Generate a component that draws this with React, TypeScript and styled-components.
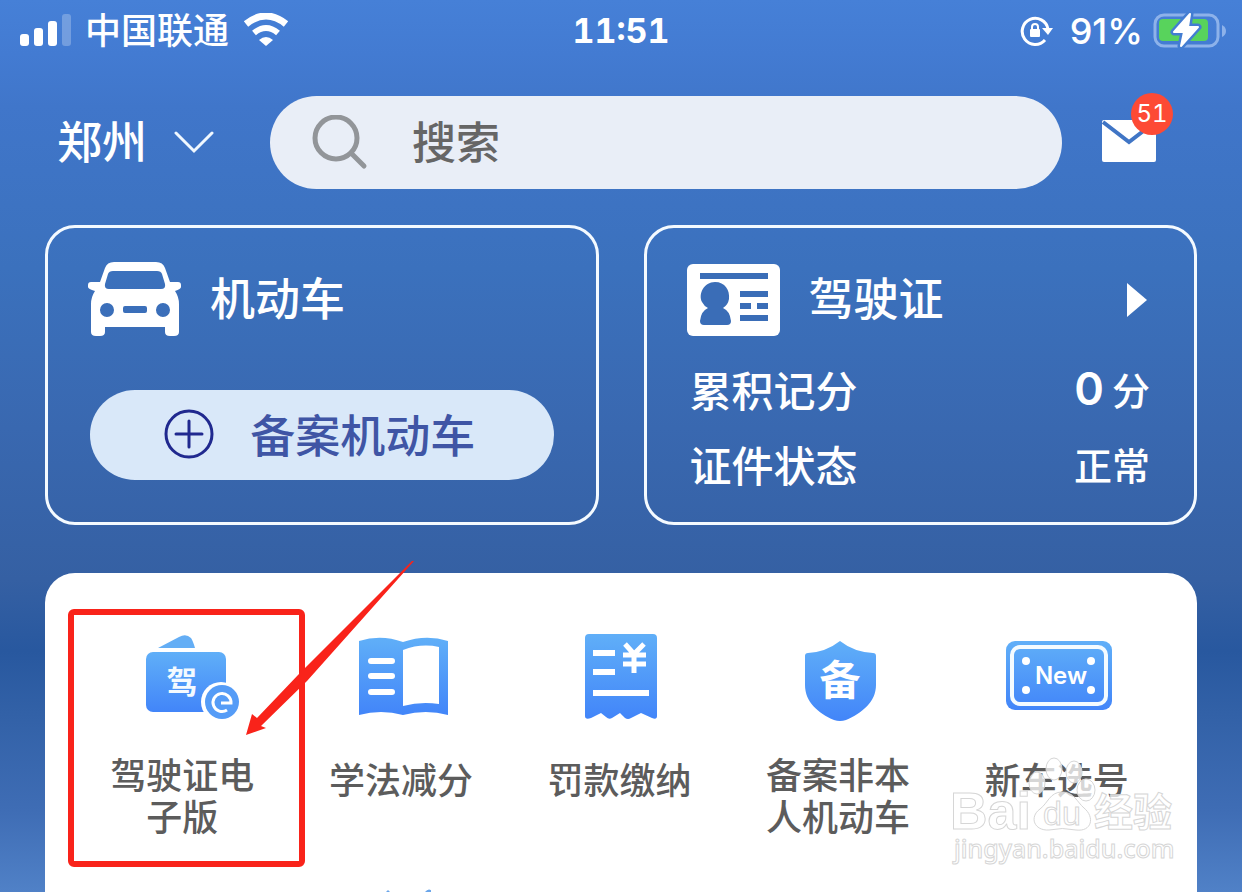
import React from "react";
import styled, { createGlobalStyle } from "styled-components";

const GlobalStyle = createGlobalStyle`
  * { box-sizing: border-box; }
  body {
    margin: 0;
    font-family: Inter, "Noto Sans CJK SC", sans-serif;
    font-weight: 500;
    color: #fff;
  }
  button {
    margin: 0;
    padding: 0;
    border: 0;
    background: none;
    color: inherit;
    font: inherit;
    cursor: pointer;
  }
  svg { display: block; flex: none; }
`;

const Page = styled.div`
  display: flex;
  flex-direction: column;
  min-height: 100vh;
  background: linear-gradient(
    180deg,
    #4680d7 0%,
    #437bd2 6%,
    #4076ca 12%,
    #3b71bd 30%,
    #3968b0 48%,
    #3560a3 65%,
    #28589f 73%,
    #3261a7 80%,
    #3f6db5 91%,
    #5081c7 100%
  );
`;

const StatusBar = styled.div`
  display: grid;
  grid-template-columns: 1fr auto 1fr;
  align-items: center;
  height: 62px;
  padding: 0 16px;
  line-height: 40px;
`;

const StatusGroup = styled.div<{ $end?: boolean }>`
  display: flex;
  align-items: center;
  justify-content: ${(p) => (p.$end ? "flex-end" : "flex-start")};
  gap: ${(p) => (p.$end ? 10 : 14)}px;
`;

const Carrier = styled.span`
  font-size: 36px;
`;

const Clock = styled.time`
  font-size: 34px;
  font-weight: 700;
  font-variant-numeric: tabular-nums;
`;

const Percent = styled.span`
  margin-left: 7px;
  font-size: 36px;
`;

const SearchRow = styled.header`
  display: flex;
  align-items: center;
  margin-top: 34px;
  padding: 0 86px 0 57px;
`;

const City = styled.button`
  display: flex;
  align-items: center;
  gap: 27px;
  width: 213px;
  font-size: 45px;
  line-height: 60px;
`;

const SearchBox = styled.label`
  display: flex;
  flex: 1;
  align-items: center;
  gap: 44px;
  min-width: 0;
  height: 93px;
  padding: 0 42px;
  border-radius: 47px;
  background: #e9eef7;
`;

const SearchInput = styled.input`
  flex: 1;
  min-width: 0;
  padding: 0;
  border: 0;
  outline: 0;
  background: none;
  color: #666;
  font: inherit;
  font-size: 44px;
  line-height: 60px;
  &::placeholder { color: #666; opacity: 1; }
`;

const Mail = styled.button`
  position: relative;
  margin-left: 40px;
`;

const Badge = styled.span`
  position: absolute;
  top: -27px;
  right: -17px;
  width: 42px;
  border-radius: 21px;
  background: #fd4a35;
  font-size: 24px;
  font-variant-numeric: tabular-nums;
  font-weight: 400;
  line-height: 42px;
  text-align: center;
`;

const Cards = styled.section`
  display: grid;
  grid-template-columns: 1fr 1fr;
  gap: 45px;
  padding: 36px 45px 48px;
`;

const Card = styled.article`
  min-height: 300px;
  padding: 33px 40px 0;
  border: 3px solid #f4faff;
  border-radius: 30px;
`;

const CardHead = styled.div`
  display: flex;
  align-items: center;
  gap: 29px;
  height: 78px;
`;

const CardTitle = styled.h2`
  flex: 1;
  margin: 0;
  font-size: 45px;
  font-weight: 500;
  line-height: 60px;
`;

const CardAction = styled.div`
  margin-top: 51px;
  padding: 0 2px;
`;

const AddButton = styled.button`
  display: flex;
  align-items: center;
  justify-content: center;
  gap: 34px;
  width: 100%;
  height: 90px;
  padding: 0 4px 4px 0;
  border-radius: 45px;
  background: #d9e8f9;
  color: #3f55a5;
  font-size: 45px;
`;

const Facts = styled.dl`
  margin: 12px 0 0;
`;

const Fact = styled.div`
  display: flex;
  align-items: center;
  justify-content: space-between;
  height: 75px;
  padding: 0 4px 0 3px;
`;

const FactName = styled.dt`
  font-size: 42px;
`;

const FactValue = styled.dd`
  display: flex;
  align-items: baseline;
  gap: 8px;
  margin: 0;
  font-size: 38px;
`;

const Score = styled.b`
  font-size: 45px;
  font-weight: 600;
`;

const Panel = styled.main`
  position: relative;
  display: flex;
  flex: 1;
  flex-direction: column;
  justify-content: space-between;
  margin: 0 45px;
  padding: 57px 31px 0 28px;
  border-radius: 30px 30px 0 0;
  background: #fff;
`;

const Services = styled.nav`
  display: grid;
  grid-template-columns: repeat(5, 1fr);
  align-items: start;
`;

const Service = styled.button`
  position: relative;
  display: flex;
  flex-direction: column;
  align-items: center;
  gap: 29px;
`;

const ServiceLabel = styled.span`
  display: flex;
  align-items: center;
  justify-content: center;
  width: 150px;
  min-height: 52px;
  color: #5c5c5c;
  font-size: 36px;
  line-height: 42px;
`;

const Highlight = styled.span`
  position: absolute;
  top: -21px;
  left: -5px;
  width: 237px;
  height: 258px;
  border: 6px solid #f9231a;
  border-radius: 6px;
`;

const Pointer = styled.svg`
  position: absolute;
  top: -13px;
  left: 200px;
  pointer-events: none;
`;

const NextRow = styled.div`
  display: grid;
  grid-template-columns: repeat(5, 1fr);
  justify-items: center;
`;

const Watermark = styled.svg`
  position: absolute;
  top: 182px;
  right: 18px;
  pointer-events: none;
`;

const BlueFill = ({ id }: { id: string }) => (
  <defs>
    <linearGradient id={id} x1="0" y1="0" x2="0" y2="1">
      <stop offset="0" stopColor="#60aff8" />
      <stop offset="1" stopColor="#4285f9" />
    </linearGradient>
  </defs>
);

const ServiceIcon = ({ x = 0, children }: { x?: number; children: React.ReactNode }) => (
  <svg width="120" height="96" viewBox={`${x} 0 120 96`} aria-hidden="true">
    {children}
  </svg>
);

const cjk = '"Noto Sans CJK SC", sans-serif';

const WalletIcon = () => (
  <ServiceIcon>
    <BlueFill id="wallet" />
    <path d="M36 18 57 7Q64 3 69 8Q71 11 73 18Z" fill="#64aef5" />
    <rect x="24" y="22" width="80" height="60" rx="7" fill="url(#wallet)" />
    <text x="60" y="63" fontSize="31" fontWeight="700" fill="#f4faff" textAnchor="middle" fontFamily={cjk}>驾</text>
    <circle cx="99" cy="72" r="20" fill="#fff" />
    <circle cx="100" cy="72" r="17" fill="#559cf7" />
    <path d="M99 73H109A9 9 0 1 0 105 80" fill="none" stroke="#fff" strokeWidth="3" />
  </ServiceIcon>
);

const BookIcon = () => (
  <ServiceIcon x={-1}>
    <BlueFill id="book" />
    <path d="M17 11Q39 4 61 12Q84 4 106 11V85Q84 79 61 85Q39 79 17 85Z" fill="url(#book)" />
    <path d="M61 20Q79 13 97 17V74Q79 71 61 76Z" fill="#fff" />
    <path d="M29 31H50M29 46H50M29 62H50" stroke="#fff" strokeWidth="6" strokeLinecap="round" />
  </ServiceIcon>
);

const ReceiptIcon = () => (
  <ServiceIcon x={-2}>
    <BlueFill id="receipt" />
    <path d="M24 8Q24 4 28 4H92Q96 4 96 8V86Q96 90 91 88L80 83 70 88Q67 90 64 88L59 83 51 88Q48 90 45 87L40 83 30 88Q24 90 24 86Z" fill="url(#receipt)" />
    <path d="M32 23H54M32 42H54M32 63H88" stroke="#fff" strokeWidth="6" />
    <path d="M64 14 73 24 83 14M73 24V43M62 25H85M62 34H85" fill="none" stroke="#fff" strokeWidth="5" />
  </ServiceIcon>
);

const ShieldIcon = () => (
  <ServiceIcon x={-2}>
    <BlueFill id="shield" />
    <path d="M60 11Q74 22 93 23Q96 23 96 26V55C96 72 82 83 66 90Q60 92 54 90C38 83 25 72 25 55V26Q25 23 28 23Q46 22 60 11Z" fill="url(#shield)" />
    <text x="60" y="65" fontSize="41" fontWeight="700" fill="#fff" textAnchor="middle" fontFamily={cjk}>备</text>
  </ServiceIcon>
);

const PlateIcon = () => (
  <ServiceIcon x={-3}>
    <BlueFill id="plate" />
    <rect x="6" y="11" width="106" height="69" rx="9" fill="url(#plate)" />
    <rect x="12" y="17" width="94" height="57" rx="8" fill="none" stroke="#f4fbff" strokeWidth="4" />
    <g fill="#fff">
      <circle cx="26" cy="31" r="4" />
      <circle cx="91" cy="31" r="4" />
      <circle cx="26" cy="60" r="4" />
      <circle cx="91" cy="60" r="4" />
    </g>
    <text x="61" y="54" fontSize="24" fontWeight="600" fill="#fff" textAnchor="middle" fontFamily="Inter, sans-serif">New</text>
  </ServiceIcon>
);

const services = [
  { label: "驾驶证电子版", icon: <WalletIcon />, marked: true },
  { label: "学法减分", icon: <BookIcon /> },
  { label: "罚款缴纳", icon: <ReceiptIcon /> },
  { label: "备案非本人机动车", icon: <ShieldIcon /> },
  { label: "新车选号", icon: <PlateIcon /> },
];

const SignalIcon = () => (
  <svg width="55" height="34" viewBox="0 0 55 34" fill="#fff" aria-hidden="true">
    <rect x="4" y="20" width="9" height="12" rx="3" />
    <rect x="18" y="14" width="9" height="18" rx="3" />
    <rect x="32" y="7" width="9" height="25" rx="3" />
    <rect x="46" y="0" width="9" height="32" rx="3" opacity="0.25" />
  </svg>
);

const WifiIcon = () => (
  <svg width="46" height="36" viewBox="0 0 46 36" aria-hidden="true">
    <path d="M3 11Q23 -5 43 11" fill="none" stroke="#fff" strokeWidth="7" />
    <path d="M11 20Q23 10 35 20" fill="none" stroke="#fff" strokeWidth="6" />
    <path d="M16 27Q23 21 30 27L23 33Z" fill="#fff" />
  </svg>
);

const RotationLockIcon = () => (
  <svg width="33" height="32" viewBox="0 0 33 32" aria-hidden="true">
    <path d="M25 25A13 13 0 1 1 28 14" fill="none" stroke="#fff" strokeWidth="3" />
    <path d="M22 13H33L28 20Z" fill="#fff" />
    <rect x="10" y="14" width="10" height="8" rx="1" fill="#fff" />
    <path d="M12 15V12A3 3 0 0 1 18 12V15" fill="none" stroke="#fff" strokeWidth="2" />
  </svg>
);

const BatteryIcon = () => (
  <svg width="73" height="38" viewBox="0 0 73 38" aria-hidden="true">
    <rect x="2" y="3" width="63" height="31" rx="9" fill="none" stroke="#8db2ea" strokeWidth="3" />
    <path d="M69 13Q73 15 73 19T69 25Z" fill="#8db2ea" />
    <rect x="6" y="7" width="49" height="22" rx="4" fill="#58d35c" />
    <path d="M37 2 21 20H31L28 34 45 15H35Z" fill="#fff" stroke="#437dd2" strokeWidth="7" strokeLinejoin="round" />
    <path d="M37 2 21 20H31L28 34 45 15H35Z" fill="#fff" stroke="#fff" strokeWidth="2" strokeLinejoin="round" />
  </svg>
);

const CarIcon = () => (
  <svg width="93" height="78" viewBox="0 0 93 78" aria-hidden="true">
    <path
      fill="#fff"
      fillRule="evenodd"
      d="M26 1H68Q75 1 77 7L82 21H90Q93 21 93 24V26Q93 28 87 30Q91 36 91 43V71Q91 75 86 75H82Q77 75 77 71V66H17V71Q17 75 12 75H8Q3 75 3 71V43Q3 36 7 30Q0 28 0 26V24Q0 21 3 21H12L17 7Q19 1 26 1ZM25 10Q21 10 20 13L17 23Q16 28 21 28H73Q78 28 77 23L74 13Q73 10 69 10ZM19 42A7 7 0 1 0 19 56A7 7 0 1 0 19 42ZM75 42A7 7 0 1 0 75 56A7 7 0 1 0 75 42ZM37 45Q35 45 35 47V50Q35 52 37 52H57Q59 52 59 50V47Q59 45 57 45Z"
    />
  </svg>
);

const LicenceIcon = () => (
  <svg width="93" height="74" viewBox="0 0 93 74" fill="#3a6db7" aria-hidden="true">
    <rect y="1" width="93" height="72" rx="6" fill="#fff" />
    <path d="M13 10H81V16H13ZM53 28H81V34H53ZM53 40H64V46H53ZM70 40H81V46H70ZM53 52H81V58H53Z" />
    <path d="M28 19C17 19 11 31 15 39Q17 43 21 45Q14 48 13 58Q13 62 17 62H40Q44 62 44 58Q43 48 36 45Q41 42 42 36C43 27 38 19 28 19Z" />
  </svg>
);

export default function App() {
  return (
    <Page>
      <GlobalStyle />
      <StatusBar>
        <StatusGroup>
          <SignalIcon />
          <Carrier>中国联通</Carrier>
          <WifiIcon />
        </StatusGroup>
        <Clock>11:51</Clock>
        <StatusGroup $end>
          <RotationLockIcon />
          <Percent>91%</Percent>
          <BatteryIcon />
        </StatusGroup>
      </StatusBar>

      <SearchRow>
        <City type="button">
          郑州
          <svg width="40" height="24" viewBox="0 0 40 24" aria-hidden="true">
            <path d="M2 2 20 20 38 2" fill="none" stroke="#f0f8ff" strokeWidth="3" strokeLinecap="round" />
          </svg>
        </City>
        <SearchBox>
          <svg width="56" height="56" viewBox="0 0 56 56" aria-hidden="true">
            <circle cx="24" cy="23" r="21" fill="none" stroke="#929599" strokeWidth="5" />
            <path d="M39 38 52 51" stroke="#929599" strokeWidth="5" strokeLinecap="round" />
          </svg>
          <SearchInput type="search" placeholder="搜索" aria-label="搜索" />
        </SearchBox>
        <Mail type="button" aria-label="消息">
          <svg width="54" height="46" viewBox="0 0 54 46" aria-hidden="true">
            <rect width="54" height="42" rx="2" fill="#fff" />
            <path d="M1 2 27 22 53 2" fill="none" stroke="#4075c5" strokeWidth="4" />
          </svg>
          <Badge>51</Badge>
        </Mail>
      </SearchRow>

      <Cards>
        <Card>
          <CardHead>
            <CarIcon />
            <CardTitle>机动车</CardTitle>
          </CardHead>
          <CardAction>
            <AddButton type="button">
              <svg width="52" height="52" viewBox="0 0 52 52" fill="none" stroke="#20298f" strokeWidth="3" aria-hidden="true">
                <circle cx="25" cy="27" r="23" />
                <path d="M25 14V40M12 27H38" strokeLinecap="round" />
              </svg>
              备案机动车
            </AddButton>
          </CardAction>
        </Card>
        <Card>
          <CardHead>
            <LicenceIcon />
            <CardTitle>驾驶证</CardTitle>
            <button type="button" aria-label="查看驾驶证">
              <svg width="28" height="34" viewBox="0 0 28 34" aria-hidden="true">
                <path d="M1 0 21 17 1 34Z" fill="#fff" />
              </svg>
            </button>
          </CardHead>
          <Facts>
            <Fact>
              <FactName>累积记分</FactName>
              <FactValue>
                <Score>0</Score>分
              </FactValue>
            </Fact>
            <Fact>
              <FactName>证件状态</FactName>
              <FactValue>正常</FactValue>
            </Fact>
          </Facts>
        </Card>
      </Cards>

      <Panel>
        <Services>
          {services.map((s) => (
            <Service type="button" key={s.label}>
              {s.icon}
              <ServiceLabel>{s.label}</ServiceLabel>
              {s.marked && <Highlight />}
            </Service>
          ))}
        </Services>
        <NextRow>
          <span />
          <svg width="60" height="4" viewBox="0 0 60 4" fill="#6aa5ea" aria-hidden="true">
            <path d="M15 4 17 2 19 4ZM54 4Q58 -1 62 4Z" />
          </svg>
        </NextRow>
        <Pointer width="170" height="178" viewBox="0 0 170 178" aria-hidden="true">
          <path d="M167 1 53 115 12 158 7 154 1 175 21 168 16 166 62 121 169 1Z" fill="#f9231a" />
        </Pointer>
        <Watermark width="230" height="120" viewBox="0 0 230 120" fill="#fff" fillOpacity="0.75" stroke="#d6d6d6" strokeWidth="1" fontFamily='"Liberation Sans", "Noto Sans CJK SC", sans-serif'>
          <ellipse cx="88" cy="28" rx="8" ry="11" />
          <ellipse cx="105" cy="14" rx="8" ry="11" />
          <ellipse cx="125" cy="17" rx="8" ry="11" />
          <ellipse cx="137" cy="35" rx="9" ry="11" />
          <path d="M113 37C101 37 99 48 91 54C80 62 85 76 100 75Q113 72 127 75C143 77 146 62 135 53C128 47 125 37 113 37Z" />
          <text x="1" y="74" fontSize="52" fontWeight="700">Bai</text>
          <text x="94" y="70" fontSize="34">du</text>
          <text x="145" y="71" fontSize="39" fontWeight="700">经验</text>
          <text x="5" y="103" fontSize="25" fontFamily='"Noto Sans", sans-serif'>jingyan.baidu.com</text>
        </Watermark>
      </Panel>
    </Page>
  );
}
